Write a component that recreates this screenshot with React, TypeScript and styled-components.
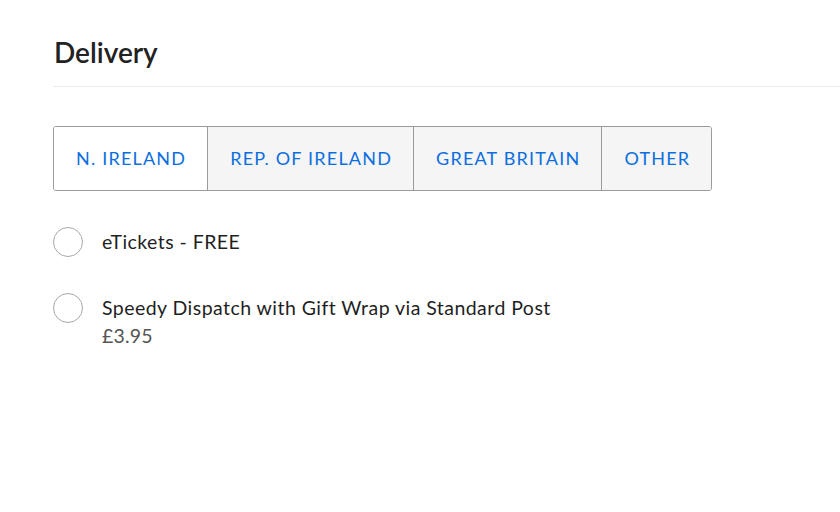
import { useState } from "react";
import styled, { createGlobalStyle } from "styled-components";

const GlobalStyle = createGlobalStyle`
  html, body {
    margin: 0;
    padding: 0;
    background: #ffffff;
  }
  body {
    font-family: Lato, "Open Sans", sans-serif;
    color: #1f1f1f;
  }
`;

const Page = styled.main`
  padding: 35px 0 0 53px;
  overflow: hidden;
`;

const Heading = styled.h2`
  margin: 0 0 0 1px;
  font-size: 28px;
  line-height: 34px;
  font-weight: 600;
  color: #222222;
`;

const Divider = styled.hr`
  margin: 17px 0 39px;
  border: 0;
  border-top: 1px solid #ebebeb;
`;

const Tabs = styled.div`
  display: inline-flex;
  border: 1px solid #9b9b9b;
  border-radius: 3px;
  overflow: hidden;
`;

const Tab = styled.button<{ $active?: boolean }>`
  height: 63px;
  padding: 0 21px 1px 22px;
  border: 0;
  border-left: 1px solid #9b9b9b;
  background: ${({ $active }) => ($active ? "#ffffff" : "#f5f5f5")};
  color: #0b6ee0;
  font-family: inherit;
  font-size: 18px;
  line-height: 24px;
  letter-spacing: 1.2px;
  cursor: pointer;

  &:first-child {
    border-left: 0;
  }
`;

const Options = styled.div`
  display: flex;
  flex-direction: column;
  gap: 36px;
  margin-top: 36px;
`;

const Option = styled.label`
  display: grid;
  grid-template-columns: 30px 1fr;
  column-gap: 19px;
  align-items: start;
  cursor: pointer;
`;

const Radio = styled.span<{ $checked?: boolean }>`
  width: 30px;
  height: 30px;
  box-sizing: border-box;
  border-radius: 50%;
  border: 1px solid #a8a8a8;
  background: #ffffff;
  box-shadow: ${({ $checked }) => ($checked ? "inset 0 0 0 7px #ffffff, inset 0 0 0 15px #0b6ee0" : "none")};
`;

const OptionText = styled.span`
  display: flex;
  flex-direction: column;
  padding-top: 2px;
`;

const OptionTitle = styled.span`
  font-size: 19.5px;
  line-height: 26px;
  letter-spacing: 0.45px;
  color: #1f1f1f;
`;

const Price = styled.span`
  font-size: 19.5px;
  line-height: 30px;
  letter-spacing: 0.2px;
  color: #555555;
`;

const regions = ["N. IRELAND", "REP. OF IRELAND", "GREAT BRITAIN", "OTHER"];

const options = [
  { id: "etickets", title: "eTickets - FREE" },
  { id: "speedy", title: "Speedy Dispatch with Gift Wrap via Standard Post", price: "£3.95" },
];

export default function App() {
  const [region, setRegion] = useState(0);
  const [selected, setSelected] = useState<string | null>(null);

  return (
    <Page>
      <GlobalStyle />
      <Heading>Delivery</Heading>
      <Divider />
      <Tabs>
        {regions.map((r, i) => (
          <Tab key={r} type="button" $active={i === region} onClick={() => setRegion(i)}>
            {r}
          </Tab>
        ))}
      </Tabs>
      <Options>
        {options.map((o) => (
          <Option key={o.id} onClick={() => setSelected(o.id)}>
            <Radio $checked={selected === o.id} />
            <OptionText>
              <OptionTitle>{o.title}</OptionTitle>
              {o.price && <Price>{o.price}</Price>}
            </OptionText>
          </Option>
        ))}
      </Options>
    </Page>
  );
}
